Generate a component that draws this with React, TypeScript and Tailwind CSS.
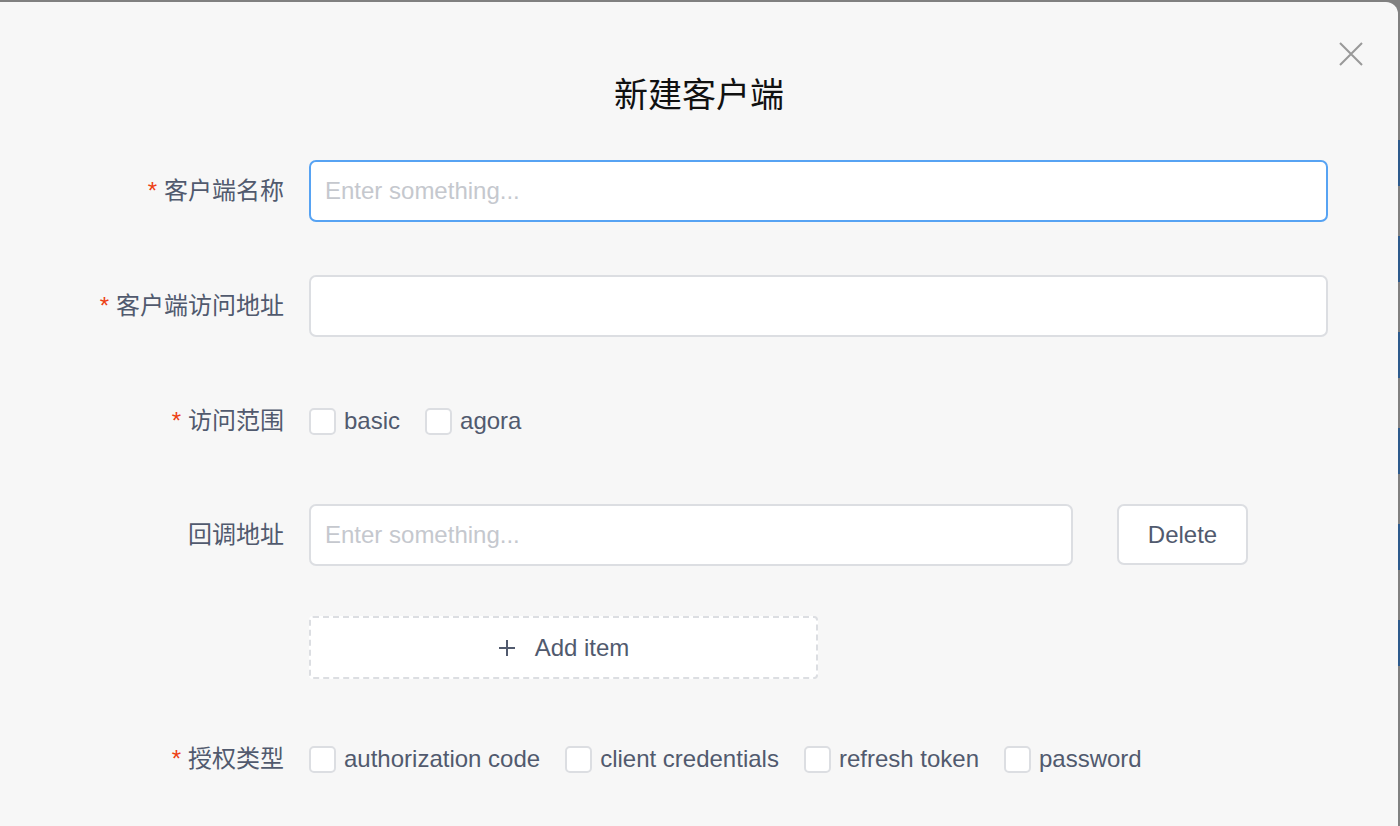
import React from "react";

const font = "font-['Liberation_Sans','Noto_Sans_CJK_SC',sans-serif]";

function Label({ text, required }: { text: string; required?: boolean }) {
  return (
    <div className="w-[309px] shrink-0 pr-[25px] flex items-center justify-end text-[24px] text-[#515a6e]">
      {required && <span className="text-[#ed4014] text-[24px] mr-[7px] leading-none">*</span>}
      <span>{text}</span>
    </div>
  );
}

function Checkbox({ label }: { label: string }) {
  return (
    <label className="flex items-center mr-[25px]">
      <span className="w-[27px] h-[27px] rounded-[5px] border-2 border-[#dcdee2] bg-white" />
      <span className="ml-[8px] text-[24px] text-[#515a6e]">{label}</span>
    </label>
  );
}

export default function App() {
  const bars = [140, 236, 332, 428, 524, 620];
  return (
    <div className={`w-[1400px] h-[826px] bg-[#808080] pt-[2px] flex overflow-hidden ${font}`}>
      <div className="w-[1398px] h-[824px] bg-[#f7f7f7] rounded-tr-[12px] flex flex-col relative">
        <button className="absolute top-[37px] left-[1336px] w-[30px] h-[30px] flex items-center justify-center">
          <svg width="24" height="24" viewBox="0 0 24 24" fill="none" stroke="#999" strokeWidth="2">
            <path d="M1 1 L23 23 M23 1 L1 23" />
          </svg>
        </button>

        <div className="pt-[73px] mb-[45px] text-center text-[34px] leading-[40px] text-[#111]">新建客户端</div>

        <div className="flex h-[62px] mb-[53px]">
          <Label text="客户端名称" required />
          <input
            className="w-[1019px] h-[62px] rounded-[7px] border-2 border-[#57a3f3] bg-white px-[14px] text-[24px] text-[#515a6e] placeholder:text-[#c5c8ce] outline-none"
            placeholder="Enter something..."
          />
        </div>

        <div className="flex h-[62px] mb-[53px]">
          <Label text="客户端访问地址" required />
          <input className="w-[1019px] h-[62px] rounded-[7px] border-2 border-[#dcdee2] bg-white px-[14px] text-[24px] outline-none" />
        </div>

        <div className="flex h-[62px] mb-[52px]">
          <Label text="访问范围" required />
          <div className="flex items-center">
            <Checkbox label="basic" />
            <Checkbox label="agora" />
          </div>
        </div>

        <div className="flex h-[62px] mb-[50px]">
          <Label text="回调地址" />
          <input
            className="w-[764px] h-[62px] rounded-[7px] border-2 border-[#dcdee2] bg-white px-[14px] text-[24px] placeholder:text-[#c5c8ce] outline-none"
            placeholder="Enter something..."
          />
          <button className="ml-[44px] w-[131px] h-[61px] rounded-[7px] border-2 border-[#dcdee2] bg-white text-[24px] text-[#515a6e]">
            Delete
          </button>
        </div>

        <div className="flex h-[62px] mb-[50px]">
          <div className="w-[309px] shrink-0" />
          <button className="w-[509px] h-[63px] rounded-[4px] border-2 border-dashed border-[#dcdee2] bg-white flex items-center justify-center text-[24px] text-[#515a6e]">
            <svg width="18" height="18" viewBox="0 0 18 18" stroke="#515a6e" strokeWidth="2" className="mr-[19px]">
              <path d="M9 1 V17 M1 9 H17" />
            </svg>
            Add item
          </button>
        </div>

        <div className="flex h-[62px]">
          <Label text="授权类型" required />
          <div className="flex items-center">
            <Checkbox label="authorization code" />
            <Checkbox label="client credentials" />
            <Checkbox label="refresh token" />
            <Checkbox label="password" />
          </div>
        </div>
      </div>

      <div className="w-[2px] h-[824px] flex flex-col">
        <div className="h-[138px] bg-[#808080]" />
        {bars.map((b) => (
          <div key={b} className="h-[96px] flex flex-col">
            <div className="h-[46px] bg-[#2d5a8c]" />
            <div className="h-[50px] bg-[#808080]" />
          </div>
        ))}
      </div>
    </div>
  );
}
